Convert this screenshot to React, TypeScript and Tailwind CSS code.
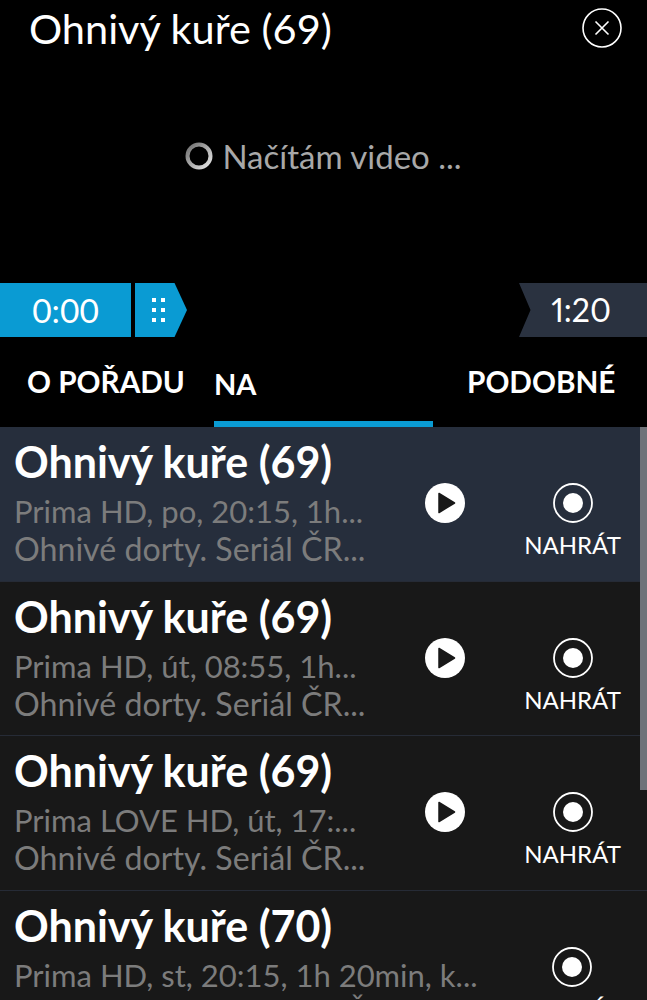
const font = "[font-family:Lato,'Noto_Sans',sans-serif]";

type Row = {
  title: string;
  info: string;
  desc: string;
  active?: boolean;
  noPlay?: boolean;
};

const rows: Row[] = [
  { title: 'Ohnivý kuře (69)', info: 'Prima HD, po, 20:15, 1h...', desc: 'Ohnivé dorty. Seriál ČR...', active: true },
  { title: 'Ohnivý kuře (69)', info: 'Prima HD, út, 08:55, 1h...', desc: 'Ohnivé dorty. Seriál ČR...' },
  { title: 'Ohnivý kuře (69)', info: 'Prima LOVE HD, út, 17:...', desc: 'Ohnivé dorty. Seriál ČR...' },
  { title: 'Ohnivý kuře (70)', info: 'Prima HD, st, 20:15, 1h 20min, k...', desc: 'Ohnivé dorty. TV seriál ČR...', noPlay: true },
];

function PlayIcon() {
  return (
    <svg width="40" height="40" viewBox="0 0 40 40">
      <circle cx="20" cy="20" r="20" fill="#fff" />
      <path d="M14 10.5 L29.5 20 L14 29.5 Z" fill="#181818" stroke="#181818" strokeWidth="1.5" strokeLinejoin="round" />
    </svg>
  );
}

function RecordIcon() {
  return (
    <svg width="40" height="40" viewBox="0 0 40 40">
      <circle cx="20" cy="20" r="19" fill="none" stroke="#fff" strokeWidth="1.8" />
      <circle cx="20" cy="20" r="10" fill="#fff" />
    </svg>
  );
}

function Spinner() {
  return (
    <svg width="28" height="28" viewBox="0 0 28 28" fill="none">
      <defs>
        <linearGradient id="ring" x1="0" y1="0" x2="1" y2="1">
          <stop offset="0" stopColor="#6e6e6e" />
          <stop offset="1" stopColor="#e8e8e8" />
        </linearGradient>
      </defs>
      <circle cx="14" cy="14" r="11.5" stroke="url(#ring)" strokeWidth="4" />
    </svg>
  );
}

function ListRow({ row }: { row: Row }) {
  return (
    <div className={`flex h-[154.67px] shrink-0 border-b border-[#262b36] pl-[14px] ${row.active ? 'bg-[#262e3c]' : 'bg-[#181818]'}`}>
      <div className="min-w-0 flex-1 pt-[10px]">
        <div className="text-[43px] leading-[50px] font-bold whitespace-nowrap text-white">{row.title}</div>
        <div className="mt-[5px] text-[31px] leading-[38px] whitespace-nowrap text-[#7c7c7c]">{row.info}</div>
        <div className="text-[32.2px] leading-[38px] whitespace-nowrap text-[#7c7c7c]">{row.desc}</div>
      </div>
      {!row.noPlay && (
        <div className="w-[40px] shrink-0 pt-[56px]">
          <PlayIcon />
        </div>
      )}
      <div className={`flex w-[97px] shrink-0 flex-col items-center pt-[56px] ${row.noPlay ? 'mr-[27px] ml-[23px]' : 'mr-[26px] ml-[59px]'}`}>
        <RecordIcon />
        <div className="mt-[7px] text-[24px] leading-[30px] whitespace-nowrap text-white">NAHRÁT</div>
      </div>
    </div>
  );
}

export default function App() {
  return (
    <div className={`relative h-screen w-full overflow-hidden bg-black text-white ${font}`}>
      <div className="flex h-[56px] items-center justify-between pr-[25px] pl-[29px]">
        <h1 className="text-[41.5px] leading-[56px] font-normal whitespace-nowrap">Ohnivý kuře (69)</h1>
        <svg width="40" height="40" viewBox="0 0 40 40" fill="none" stroke="#fff">
          <circle cx="20" cy="20" r="19" strokeWidth="1.6" />
          <path d="M13.5 13.5 L26.5 26.5 M26.5 13.5 L13.5 26.5" strokeWidth="1.6" />
        </svg>
      </div>

      <div className="flex h-[227px] items-start justify-center pt-[80px]">
        <div className="flex h-[40px] items-center gap-[9px]">
          <Spinner />
          <span className="text-[33px] leading-[40px] text-[#a8a8a8]">Načítám video ...</span>
        </div>
      </div>

      <div className="flex h-[54px] justify-between">
        <div className="flex">
          <div className="flex w-[131px] items-center justify-center bg-[#0a9bd3] text-[33.5px]">0:00</div>
          <div className="ml-[4px] flex w-[52px] items-center bg-[#0a9bd3] pl-[17px] [clip-path:polygon(0_0,76%_0,100%_50%,76%_100%,0_100%)]">
            <div className="grid grid-cols-2 gap-x-[5px] gap-y-[6px]">
              {[0, 1, 2, 3, 4, 5].map(i => (
                <span key={i} className="h-[4px] w-[4px] bg-white" />
              ))}
            </div>
          </div>
        </div>
        <div className="flex w-[128px] items-center justify-end bg-[#2a3240] pr-[36px] text-[32px] proportional-nums [clip-path:polygon(0_0,100%_0,100%_100%,0_100%,9%_50%)]">1:20</div>
      </div>

      <div className="flex h-[90px] text-[29.7px] font-bold">
        <div className="w-[214px] pt-[23px] pl-[27px] whitespace-nowrap">O POŘADU</div>
        <div className="w-[219px] border-b-[6px] border-[#0a9bd3] pt-[25px] text-[29px]">NA</div>
        <div className="flex-1 pt-[23px] pl-[34px] whitespace-nowrap">PODOBNÉ</div>
      </div>

      <div>
        {rows.map((row, i) => (
          <ListRow key={i} row={row} />
        ))}
      </div>

      <div className="absolute top-[427px] right-0 h-[363px] w-[7px] bg-[#6f7279]" />
    </div>
  );
}
